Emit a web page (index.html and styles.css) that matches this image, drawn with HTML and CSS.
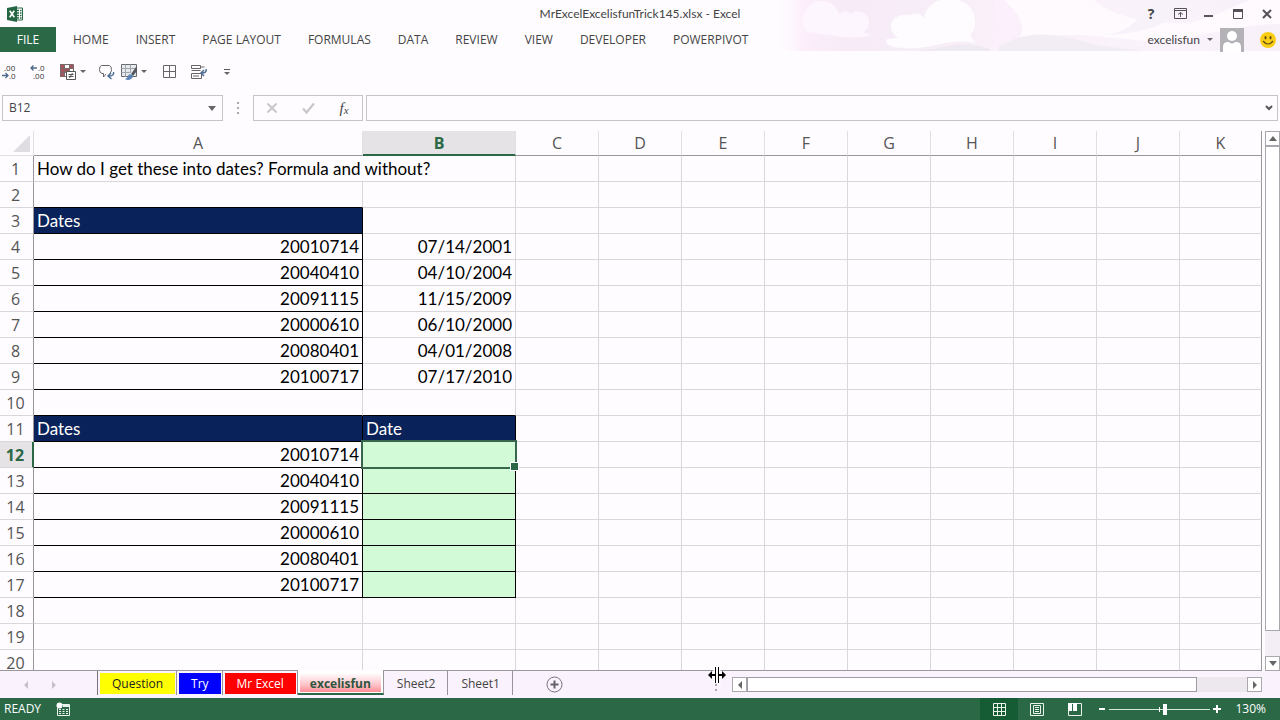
FILE: index.html
```html
<!DOCTYPE html>
<html lang="en">
<head>
<meta charset="utf-8">
<title>MrExcelExcelisfunTrick145.xlsx - Excel</title>
<link rel="stylesheet" href="styles.css">
</head>
<body>
<div class="app">
  <header class="top">
    <svg class="clouds" width="500" height="51" viewBox="0 0 500 51" aria-hidden="true">
      <defs>
        <linearGradient id="sky" x1="0" x2="1" y1="0" y2="0">
          <stop offset="0" stop-color="#fdf2fd" stop-opacity="0"/>
          <stop offset=".05" stop-color="#fceefb"/>
          <stop offset=".14" stop-color="#f6ebf7"/>
          <stop offset=".45" stop-color="#f9f0f9"/>
          <stop offset=".8" stop-color="#fbf3fc"/>
          <stop offset="1" stop-color="#f7f0f9"/>
        </linearGradient>
      </defs>
      <rect width="500" height="51" fill="url(#sky)"/>
      <path d="M28 32C18 26 22 2 42 1c10 0 16 8 17 13 6-4 10-2 12 0 8-6 19 0 18 8 0 6-3 9-6 10l8 3c-20 6-38 0-63-3z" fill="#fdf6fe"/>
      <path d="M118 38c-14-10-6-26 12-23 5-3 11-1 14 3 3-24 44-26 50-3 3 10 0 17-4 19l5 9c-26-6-44 7-72 5-12 0-20-4-16-9z" fill="#fefcff"/>
      <path d="M142 50c24 0 32-12 68-1v2h-68z" fill="#efeaf1"/>
      <path d="M214 0h26c4 20 0 36-16 50h-12z" fill="#fbf0fb"/>
      <path d="M224 0h90c20 18 60 26 100 22 28-8 40-16 56-22h30v24c-40 0-66 10-120 17-50 0-70-12-142-2 10-12 0-26-14-39z" fill="#fefafe"/>
      <path d="M218 47c30-18 56-14 90-4 22 5 38 5 56 8H218z" fill="#f2edf4"/>
      <path d="M320 35c30 0 38-18 56-35h36c-18 12-24 34-92 35z" fill="#f7f1f9"/>
    </svg>
    <div class="titlebar">
      <div class="app-logo">
        <svg width="16" height="16" viewBox="0 0 16 16" aria-hidden="true"><path d="M9 2h6.500v12H9z" fill="#fff" stroke="#2a6846"/><path d="M10 4.500h2m1 0h1.500M10 7h2m1 0h1.500M10 9.500h2m1 0h1.500M10 12h2m1 0h1.500" stroke="#2a6846" stroke-width="1.300"/><path d="M0 2 10 0v16L0 14z" fill="#256642"/><path d="m2.700 4.800 4.600 6.500M7.200 4.800l-4.500 6.500" stroke="#fff" stroke-width="1.600"/></svg>
      </div>
      <h1 class="title">MrExcelExcelisfunTrick145.xlsx - Excel</h1>
      <div class="window-buttons">
        <button aria-label="Help" class="help">?</button>
        <button aria-label="Ribbon display options"><svg width="13" height="11" viewBox="0 0 13 11"><path d="M.5.500h12v10H.5zM.5 2.500h12M6.500 9V4.500M4 6.500l2.500-2 2.500 2" fill="none" stroke="#555058"/></svg></button>
        <button aria-label="Minimize"><svg width="10" height="10" viewBox="0 0 10 10"><path d="M0 6h9v2H0z" fill="#5a555c"/></svg></button>
        <button aria-label="Restore"><svg width="10" height="10" viewBox="0 0 10 10"><path d="M.5 1h9v8.500h-9z" fill="none" stroke="#555058"/><path d="M0 0h10v3H0z" fill="#555058"/></svg></button>
        <button aria-label="Close"><svg width="10" height="10" viewBox="0 0 10 10"><path d="m1 1 8 8m0-8L1 9" stroke="#555058" stroke-width="2"/></svg></button>
      </div>
    </div>
    <div class="ribbon">
      <nav class="menu">
        <button class="file">FILE</button>
        <button>HOME</button><button>INSERT</button><button>PAGE LAYOUT</button><button>FORMULAS</button><button>DATA</button><button>REVIEW</button><button>VIEW</button><button>DEVELOPER</button><button>POWERPIVOT</button>
      </nav>
      <div class="account">
        <button class="user">excelisfun<i class="caret"></i></button>
        <svg width="24" height="24" viewBox="0 0 24 24" aria-label="Account picture"><path d="M0 0h24v24H0z" fill="#b4b2b6"/><circle cx="12" cy="8" r="5" fill="#fff"/><path d="M3 24v-5q0-5 5-5h1q3 3 6 0h1q5 0 5 5v5z" fill="#fff"/></svg>
        <button class="smile" aria-label="Send a smile"><svg width="16" height="16" viewBox="0 0 16 16"><circle cx="8" cy="8" r="8" fill="#f9cd16"/><ellipse cx="5.500" cy="5.700" rx="1" ry="1.700" fill="#5d4a10"/><ellipse cx="10.500" cy="5.700" rx="1" ry="1.700" fill="#5d4a10"/><path d="M3 9q5 6 10 0" fill="none" stroke="#5d4a10" stroke-width="1.200"/></svg></button>
      </div>
    </div>
  </header>

  <div class="quick" role="toolbar" aria-label="Quick access">
    <button aria-label="Decrease decimal"><svg width="16" height="16" viewBox="0 0 16 16"><text x="2" y="7" class="dec">.00</text><text x="7" y="15" class="dec">.0</text><path d="M0 11.500h6M3.500 9 6 11.500 3.500 14" fill="none" stroke="#4d6a8c" stroke-width="1.300"/></svg></button>
    <button aria-label="Increase decimal"><svg width="16" height="16" viewBox="0 0 16 16"><text x="7" y="7" class="dec">.0</text><text x="2" y="15" class="dec">.00</text><path d="M0 4h6M2.500 1.500 0 4l2.500 2.500" fill="none" stroke="#4d6a8c" stroke-width="1.300"/></svg></button>
    <button class="wide" aria-label="Conditional formatting"><svg width="16" height="16" viewBox="0 0 16 16"><path d="M0 0h4v5h5v3H5v5H0z" fill="#a4555a"/><path d="M10 1h3v3h-3z" fill="#a4555a"/><path d="M.5.500h13v12H.5zM.5 4.500h13M.5 8.500h8M4.500.5v12M9.500.5v7" fill="none" stroke="#77686c"/><path d="M6.500 7.500h9v8h-9z" fill="#fff" stroke="#555"/><path d="M8.500 10.500h5m-5 2h5M12.500 9l-3 5" stroke="#555"/></svg><i class="caret"></i></button>
    <button aria-label="Comment"><svg width="16" height="16" viewBox="0 0 16 16"><path d="M2.500 1.500h8q2 1 2 4t-2 4H7.500l-3 3.500v-3.500H3Q.5 9 .5 5.500t2-4z" fill="none" stroke="#67646a"/><path d="M7 9h8v6H8z" fill="#fefcff"/><path d="M14.500 8q1 4-5 4m2.500-3L9 12l3.500 3" fill="none" stroke="#4d6f94" stroke-width="1.500"/></svg></button>
    <button class="wide paired" aria-label="Format as table"><svg width="16" height="16" viewBox="0 0 16 16"><path d="M.5.500h15v12H.5z" fill="#e6e9ed" stroke="#66696e"/><path d="M.5 4.500h15M.5 8.500h9M4.500.5v12M9.500.5v8" fill="none" stroke="#a1a6ad"/><path d="m10 10 5-7 1 1v3l-4 5z" fill="#555a61"/><path d="M4 15q2 0 3-3t4-1q2 2-1 4-3 2-6 0z" fill="#5b83b4"/></svg><i class="caret"></i></button>
    <button aria-label="Borders" class="borders"><svg width="13" height="13" viewBox="0 0 13 13"><path d="M.5.500h12v12H.5zM.5 6.500h12M6.500.5v12" fill="none" stroke="#67646a"/></svg></button>
    <button aria-label="Wrap text"><svg width="16" height="16" viewBox="0 0 16 16"><path d="M.5 1.500h9v3h-9zM9.500 3h4M.5 6.500h9M.5 9.500h10v5H.5zM2 12h6" fill="none" stroke="#67646a"/><path d="M15 5q1 4-4 4m2-3-3 3 3 3" fill="none" stroke="#4d6f94" stroke-width="1.500"/></svg></button>
    <button aria-label="Customize toolbar" class="more"><i class="caret barred"></i></button>
  </div>

  <div class="formula-row">
    <div class="name-box"><input aria-label="Name box" value="B12"><button aria-label="Names"><i class="caret large"></i></button></div>
    <span class="dots"><i></i><i></i><i></i></span>
    <div class="formula-buttons">
      <button aria-label="Cancel"><svg width="12" height="12" viewBox="0 0 12 12"><path d="m1.500 1.500 9 9m0-9-9 9" stroke="#c9c6cb" stroke-width="2"/></svg></button>
      <button aria-label="Enter"><svg width="13" height="12" viewBox="0 0 13 12"><path d="m1 6.500 3.500 4L12 1.500" fill="none" stroke="#c9c6cb" stroke-width="2.200"/></svg></button>
      <button aria-label="Insert function" class="fx">f<small>x</small></button>
    </div>
    <div class="formula-box"><input aria-label="Formula"><button aria-label="Expand formula bar"><svg width="8" height="6" viewBox="0 0 8 6"><path d="m1 1 3 3 3-3" fill="none" stroke="#555" stroke-width="2"/></svg></button></div>
  </div>

  <main class="workspace">
    <div class="grid">
      <table>
        <colgroup><col class="c-num"><col class="c-a"><col class="c-b"><col class="c-n"><col class="c-n"><col class="c-n"><col class="c-n"><col class="c-n"><col class="c-n"><col class="c-n"><col class="c-n"><col></colgroup>
        <thead><tr><th class="corner"><svg width="17" height="17" viewBox="0 0 17 17"><path d="M17 0v17H0z" fill="#dfdde1"/></svg></th><th>A</th><th class="on">B</th><th>C</th><th>D</th><th>E</th><th>F</th><th>G</th><th>H</th><th>I</th><th>J</th><th>K</th></tr></thead>
        <tbody>
          <tr><th>1</th><td colspan="2">How do I get these into dates? Formula and without?</td><td></td><td></td><td></td><td></td><td></td><td></td><td></td><td></td><td></td></tr>
          <tr><th>2</th><td class="under"></td><td></td><td></td><td></td><td></td><td></td><td></td><td></td><td></td><td></td><td></td></tr>
          <tr><th>3</th><td class="box head">Dates</td><td></td><td></td><td></td><td></td><td></td><td></td><td></td><td></td><td></td><td></td></tr>
          <tr><th>4</th><td class="box num">20010714</td><td class="num">07/14/2001</td><td></td><td></td><td></td><td></td><td></td><td></td><td></td><td></td><td></td></tr>
          <tr><th>5</th><td class="box num">20040410</td><td class="num">04/10/2004</td><td></td><td></td><td></td><td></td><td></td><td></td><td></td><td></td><td></td></tr>
          <tr><th>6</th><td class="box num">20091115</td><td class="num">11/15/2009</td><td></td><td></td><td></td><td></td><td></td><td></td><td></td><td></td><td></td></tr>
          <tr><th>7</th><td class="box num">20000610</td><td class="num">06/10/2000</td><td></td><td></td><td></td><td></td><td></td><td></td><td></td><td></td><td></td></tr>
          <tr><th>8</th><td class="box num">20080401</td><td class="num">04/01/2008</td><td></td><td></td><td></td><td></td><td></td><td></td><td></td><td></td><td></td></tr>
          <tr><th>9</th><td class="box num">20100717</td><td class="num">07/17/2010</td><td></td><td></td><td></td><td></td><td></td><td></td><td></td><td></td><td></td></tr>
          <tr><th>10</th><td class="under"></td><td class="under"></td><td></td><td></td><td></td><td></td><td></td><td></td><td></td><td></td><td></td></tr>
          <tr><th>11</th><td class="box head">Dates</td><td class="box head">Date</td><td></td><td></td><td></td><td></td><td></td><td></td><td></td><td></td><td></td></tr>
          <tr><th class="on">12</th><td class="box num">20010714</td><td class="box answer"><span class="selection"></span></td><td></td><td></td><td></td><td></td><td></td><td></td><td></td><td></td><td></td></tr>
          <tr><th>13</th><td class="box num">20040410</td><td class="box answer"></td><td></td><td></td><td></td><td></td><td></td><td></td><td></td><td></td><td></td></tr>
          <tr><th>14</th><td class="box num">20091115</td><td class="box answer"></td><td></td><td></td><td></td><td></td><td></td><td></td><td></td><td></td><td></td></tr>
          <tr><th>15</th><td class="box num">20000610</td><td class="box answer"></td><td></td><td></td><td></td><td></td><td></td><td></td><td></td><td></td><td></td></tr>
          <tr><th>16</th><td class="box num">20080401</td><td class="box answer"></td><td></td><td></td><td></td><td></td><td></td><td></td><td></td><td></td><td></td></tr>
          <tr><th>17</th><td class="box num">20100717</td><td class="box answer"></td><td></td><td></td><td></td><td></td><td></td><td></td><td></td><td></td><td></td></tr>
          <tr><th>18</th><td></td><td></td><td></td><td></td><td></td><td></td><td></td><td></td><td></td><td></td><td></td></tr>
          <tr><th>19</th><td></td><td></td><td></td><td></td><td></td><td></td><td></td><td></td><td></td><td></td><td></td></tr>
          <tr><th>20</th><td></td><td></td><td></td><td></td><td></td><td></td><td></td><td></td><td></td><td></td><td></td></tr>
        </tbody>
      </table>
    </div>
    <div class="vscroll">
      <button aria-label="Scroll up"><i class="caret large up"></i></button>
      <div class="vtrack"><div class="vthumb"></div></div>
      <button aria-label="Scroll down"><i class="caret large"></i></button>
    </div>
  </main>

  <div class="sheetbar">
    <div class="sheet-nav"><button aria-label="Previous sheet"><i class="arrow left"></i></button><button aria-label="Next sheet"><i class="arrow right"></i></button></div>
    <div class="tabs" role="tablist">
      <button role="tab" class="tab yellow"><span>Question</span></button>
      <button role="tab" class="tab blue"><span>Try</span></button>
      <button role="tab" class="tab red"><span>Mr Excel</span></button>
      <button role="tab" class="tab active" aria-selected="true"><span>excelisfun</span></button>
      <button role="tab" class="tab plain"><span>Sheet2</span></button>
      <button role="tab" class="tab plain"><span>Sheet1</span></button>
    </div>
    <button class="add" aria-label="New sheet"><svg width="17" height="17" viewBox="0 0 17 17"><circle cx="8.500" cy="8.500" r="7.500" fill="none" stroke="#77737a"/><path d="M8.500 4.500v8m-4-4h8" stroke="#666269" stroke-width="2"/></svg></button>
    <div class="splitter"><span class="dots"><i></i><i></i><i></i></span>
      <svg class="cursor" width="18" height="18" viewBox="0 0 18 18" aria-hidden="true"><path d="M7.500 1v16m3-16v16M6 9H2m10 0h4" stroke="#fff" stroke-width="4"/><path d="M9 1v16" stroke="#fff" stroke-width="2"/><path d="M7.500 1v16m3-16v16" stroke="#000"/><path d="M7 8H4V5L0 9l4 4v-3h3zM11 8h3V5l4 4-4 4v-3h-3z" fill="#000"/></svg>
    </div>
    <div class="hscroll">
      <button aria-label="Scroll left"><i class="arrow left"></i></button>
      <div class="htrack"><div class="hthumb"></div></div>
      <button aria-label="Scroll right"><i class="arrow right"></i></button>
    </div>
  </div>

  <footer class="status">
    <span>READY</span>
    <button aria-label="Record macro" class="macro"><svg width="14" height="14" viewBox="0 0 14 14"><path d="M4 2.500h9.500v11h-12V6M7 2.500h6" fill="none" stroke="#e9f3ec"/><path d="M7 2h6v3H7z" fill="#e9f3ec"/><circle cx="3.500" cy="3.500" r="3" fill="#fff"/><path d="M3 7.500h2m1.500 0h2m1.500 0h2M3 9.500h2m1.500 0h2m1.500 0h2M3 11.500h2m1.500 0h2m1.500 0h2" stroke="#e9f3ec"/></svg></button>
    <div class="views">
      <button class="on" aria-label="Normal view"><svg width="13" height="13" viewBox="0 0 13 13"><path d="M.5.500h12v12H.5zM.5 4.500h12m-12 4h12M4.500.5v12m4-12v12" fill="none" stroke="#e9f3ec"/></svg></button>
      <button aria-label="Page layout view"><svg width="14" height="13" viewBox="0 0 14 13"><path d="M.5.500h13v12H.5zM3.500 2.500h7v8h-7zM5 4.500h4m-4 2h4m-4 2h4" fill="none" stroke="#e9f3ec"/></svg></button>
      <button aria-label="Page break view"><svg width="14" height="13" viewBox="0 0 14 13"><path d="M.5.500h13v12H.5z" fill="none" stroke="#e9f3ec"/><path d="M0 0h4v8H0zM5 0h4v8H5z" fill="#fff"/></svg></button>
    </div>
    <div class="zoom">
      <button aria-label="Zoom out"><svg width="8" height="8" viewBox="0 0 8 8"><path d="M1 3h6v2H1z" fill="#fff"/></svg></button>
      <input type="range" aria-label="Zoom" min="0" max="100" value="55">
      <button aria-label="Zoom in"><svg width="8" height="8" viewBox="0 0 8 8"><path d="M0 3h8v2H0zM3 0h2v8H3z" fill="#fff"/></svg></button>
      <output>130%</output>
    </div>
  </footer>
</div>
</body>
</html>
```
FILE: styles.css
```css
* { box-sizing: border-box; }

body {
  margin: 0;
  background: #fefcff;
  color: #444;
  font: 12px/16px "Open Sans", "Noto Sans", sans-serif;
}

button, input {
  margin: 0;
  padding: 0;
  border: 0;
  background: none;
  color: inherit;
  font: inherit;
}

button { display: flex; align-items: center; justify-content: center; flex: none; }
svg { display: block; flex: none; overflow: visible; }

.app { display: flex; flex-direction: column; height: 100vh; overflow: hidden; }

.caret { border: 3px solid transparent; border-top-color: #666; border-bottom: 0; }
.caret.large { border-width: 5px 4px 0; }
.caret.large.up { border: 4px solid transparent; border-bottom: 5px solid #666; border-top: 0; }
.caret.barred { position: relative; }
.caret.barred::before { content: ""; position: absolute; left: -3px; top: -6px; width: 6px; height: 1px; background: #555; }
.arrow { border: 4px solid transparent; }
.arrow.left { border-right-color: #666; border-left: 0; }
.arrow.right { border-left-color: #666; border-right: 0; }
.dots { display: flex; flex-direction: column; gap: 3px; }
.dots i { width: 2px; height: 2px; background: #aaa6ac; }

/* Title bar and ribbon tabs */
.top { position: relative; flex: none; }
.clouds { position: absolute; right: 0; top: 0; }
.titlebar, .ribbon { position: relative; display: flex; align-items: center; }
.titlebar { display: grid; grid-template-columns: 1fr auto 1fr; height: 27px; }
.app-logo { padding-left: 7px; }
.title, .user { margin: 0; font: 12px/16px Lato, sans-serif; }
.window-buttons { display: flex; justify-content: flex-end; gap: 5px; padding-right: 1px; }
.window-buttons button { width: 24px; height: 24px; }
.window-buttons .help { font-size: 14px; font-weight: 700; }
.ribbon { height: 25px; }
.menu { display: flex; align-items: center; gap: 27px; }
.menu .file { width: 56px; height: 25px; margin-right: -10px; background: #2a6846; color: #fff; }
.account { display: flex; align-items: center; margin-left: auto; padding-right: 4px; }
.user { gap: 7px; padding-right: 7px; }
.smile { margin-left: 16px; }

.quick { display: flex; align-items: center; gap: 13px; flex: none; height: 43px; padding: 0 2px 4px; }
.quick .wide { gap: 4px; }
.quick .paired { margin-left: -7px; }
.borders { margin: 0 2px 0 3px; }
.more { margin: 3px 0 0 4px; }
.dec { font-size: 8px; fill: #333; }

/* Formula bar */
.formula-row { display: flex; align-items: center; flex: none; height: 26px; padding: 0 2px; }
.name-box, .formula-box, .formula-buttons { display: flex; height: 26px; border: 1px solid #c6c3c9; background: #fefcff; }
.name-box { width: 221px; }
.name-box input, .formula-box input { flex: 1; min-width: 0; padding-left: 6px; }
.name-box button { width: 20px; }
.formula-row .dots { margin: 0 14px; }
.formula-buttons button { width: 36px; }
.formula-box { flex: 1; margin-left: 3px; }
.formula-box button { width: 16px; }
.formula-buttons .fx { font: italic 15px/20px "Liberation Serif", serif; }
.fx small { align-self: flex-end; font-size: 11px; }

/* Worksheet */
.workspace { display: flex; flex: 1; gap: 3px; min-height: 0; padding-top: 10px; }
.grid { flex: 1; min-width: 0; overflow: hidden; border-bottom: 1px solid #9b979d; }
table { width: 100%; table-layout: fixed; border-collapse: separate; border-spacing: 0; }
.c-num { width: 34px; }
.c-a { width: 329px; }
.c-b { width: 153px; }
.c-n { width: 83px; }
td, th { height: 26px; padding: 0 3px; line-height: 20px; border: solid #d9d6dc; border-width: 0 1px 1px 0; white-space: nowrap; }
td { color: #000; font-family: Lato, sans-serif; font-size: 17px; text-align: left; }
th { color: #555; font-size: 16px; font-weight: 400; text-align: center; }
tr > :last-child { border-right-color: #9b979d; }
thead th { height: 25px; border-color: #e3e0e5 #e3e0e5 #9b979d; }
thead .corner { padding: 0; border-bottom-color: #e3e0e5; }
.corner svg { margin-left: 13px; }
tbody th { padding: 0 5px 0 3px; border-right-color: #9b979d; }
th.on { background: #e5e3e6; color: #2a6846; font-weight: 700; }
thead th.on { border-bottom: 2px solid #2a6846; }
tbody th.on { border-right: 2px solid #2a6846; }
.num { text-align: right; }
.under { border-bottom-color: #000; }
.box { border-color: #000; }
.head { background: #092259; color: #fff; }
.answer { position: relative; background: #d3fad6; }
.selection { position: absolute; z-index: 1; inset: -2px; border: 2px solid #37664c; }
.selection::after { content: ""; position: absolute; right: -4px; bottom: -4px; width: 7px; height: 7px; border: 1px solid #fff; background: #2a6846; }

.vscroll { display: flex; flex-direction: column; width: 15px; background: #f3eef5; }
.vscroll button, .hscroll button { width: 15px; height: 15px; border: 1px solid #aba7ae; background: #fff; }
.vtrack { flex: 1; }
.vthumb { height: 95%; border: 1px solid #aba7ae; background: #fff; }

/* Sheet tabs */
.sheetbar { display: flex; align-items: flex-start; flex: none; height: 27px; background: #faf2fc; }
.sheet-nav { display: flex; width: 97px; height: 27px; padding-left: 12px; }
.sheet-nav button { width: 28px; }
.sheet-nav .left { border-right-color: #c5c1c7; }
.sheet-nav .right { border-left-color: #c5c1c7; }
.tabs { display: flex; border-left: 1px solid #77737a; height: 24px; }
.tab { position: relative; height: 24px; padding: 2px 1px 1px 2px; border-right: 1px solid #98949a; }
.tab span { padding: 0 12px; line-height: 21px; }
.tab.active { margin-top: -1px; height: 25px; padding: 3px 2px 1px; border-bottom: 2px solid #2a6846; background: #fff; font-weight: 700; color: #2f5540; }
.active span { padding: 3px 10px 0; line-height: 16px; background: linear-gradient(#fff, #ffc5cb 60%, #ff8d95); }
.yellow span { background: #ff0; color: #222; }
.blue span { background: #00f; color: #fff; }
.red span { background: #f00; color: #fff; }
.plain span { padding: 0 11px; }
.add { margin: 5px 0 0 33px; }
.splitter { position: relative; display: flex; align-items: center; height: 27px; margin-left: auto; padding-right: 15px; }
.cursor { position: absolute; left: -7px; top: -5px; }
.hscroll { display: flex; width: 530px; margin: 6px 18px 0 0; }
.htrack { flex: 1; background: #ede8ee; }
.hthumb { width: 90%; height: 15px; border: 1px solid #9f9ba2; background: #fff; }

/* Status bar */
.status { display: flex; align-items: center; flex: none; height: 22px; padding: 0 14px 0 4px; background: #2a6846; color: #fff; }
.macro { margin-left: 15px; }
.views { display: flex; margin-left: auto; }
.views button { width: 38px; height: 22px; }
.views .on { background: #155c35; }
.zoom { display: flex; align-items: center; padding-left: 4px; }
.zoom input { width: 101px; height: 12px; margin: 0 3px; appearance: none; background: linear-gradient(#fff, #fff) 50% 50% / 1px 5px no-repeat, linear-gradient(#d6e6dc, #d6e6dc) 0 50% / 100% 1px no-repeat; }
.zoom input::-webkit-slider-thumb { appearance: none; width: 4px; height: 11px; background: #fff; }
.zoom output { margin-left: 14px; }
```
